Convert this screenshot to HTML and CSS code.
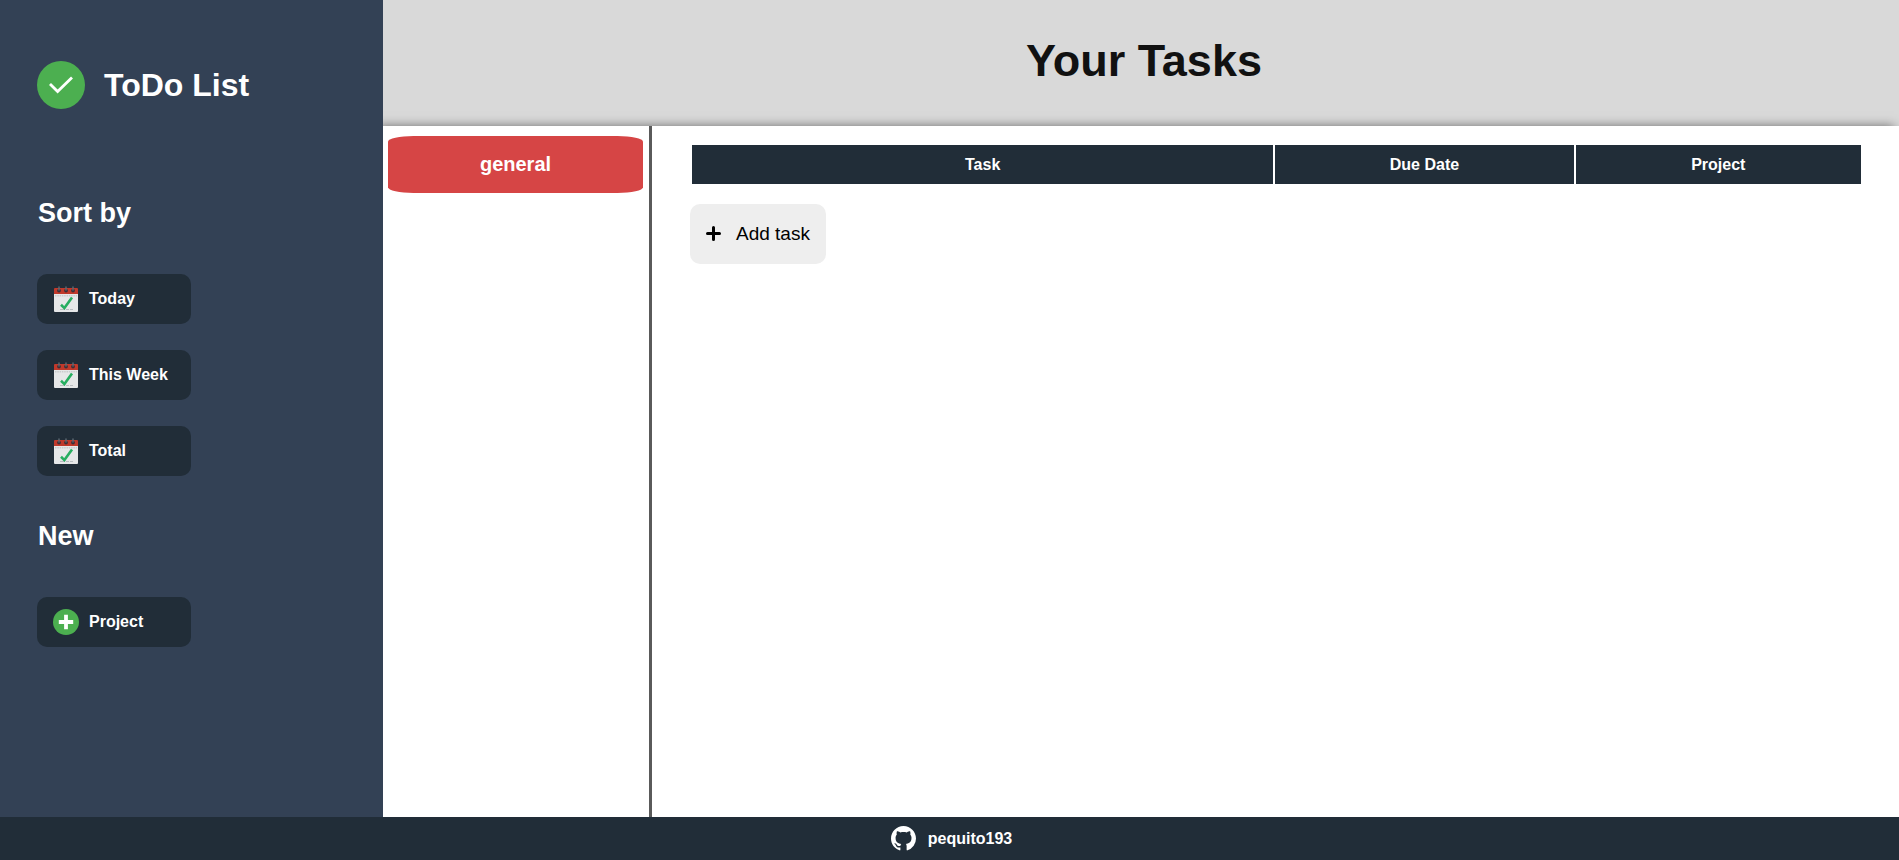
FILE: index.html
```html
<!DOCTYPE html>
<html lang="en">
<head>
<meta charset="utf-8">
<meta name="viewport" content="width=device-width, initial-scale=1">
<title>ToDo List</title>
<link rel="stylesheet" href="styles.css">
</head>
<body>
<svg class="sprite" aria-hidden="true">
  <symbol id="calendar" viewBox="0 0 26 26">
    <path fill="#e6e7e8" d="M1 7h24v18a1 1 0 0 1-1 1H2a1 1 0 0 1-1-1z"/>
    <path fill="#c0392b" d="M2 2h22a1 1 0 0 1 1 1v5H1V3a1 1 0 0 1 1-1z"/>
    <g fill="#3b2f38"><circle cx="6" cy="4.600" r="1.900"/><circle cx="13" cy="4.600" r="1.900"/><circle cx="20" cy="4.600" r="1.900"/></g>
    <path stroke="#5f6b75" stroke-width="1.400" stroke-linecap="round" d="M6 1v3M13 1v3M20 1v3"/>
    <path stroke="#c9cccd" stroke-width="1.500" stroke-dasharray="1.500 .8" d="M2 9.800h22"/>
    <path stroke="#b9bdc0" stroke-width="1" stroke-dasharray="5 1 3 1" d="M7 23.500h13"/>
    <path fill="none" stroke="#27ae60" stroke-width="2.600" d="M8 18.800l3.400 3.300L19 11.600"/>
  </symbol>
</svg>
<div class="page">
  <aside class="sidebar">
    <div class="brand">
      <svg class="brand-icon" viewBox="0 0 48 48" aria-hidden="true"><circle cx="24" cy="24" r="24" fill="#4caf50"/><path fill="none" stroke="#fff" stroke-width="2.800" d="M13 23l7.600 7.600L35 16.600"/></svg>
      <h1 class="brand-name">ToDo List</h1>
    </div>
    <h2 class="group-title">Sort by</h2>
    <div class="group">
      <button class="nav-button" type="button"><svg class="nav-icon" aria-hidden="true"><use href="#calendar"/></svg>Today</button>
      <button class="nav-button" type="button"><svg class="nav-icon" aria-hidden="true"><use href="#calendar"/></svg>This Week</button>
      <button class="nav-button" type="button"><svg class="nav-icon" aria-hidden="true"><use href="#calendar"/></svg>Total</button>
    </div>
    <h2 class="group-title">New</h2>
    <div class="group">
      <button class="nav-button" type="button"><svg class="nav-icon" viewBox="0 0 26 26" aria-hidden="true"><circle cx="13" cy="13" r="13" fill="#4caf50"/><path stroke="#fff" stroke-width="3.800" d="M13 5.800v14.400M5.800 13h14.400"/></svg>Project</button>
    </div>
  </aside>
  <header class="header"><h1 class="title">Your Tasks</h1></header>
  <main class="content">
    <nav class="projects" aria-label="Projects">
      <button class="project" type="button">general</button>
    </nav>
    <section class="tasks">
      <table class="task-table">
        <colgroup><col class="col-task"><col class="col-date"><col class="col-project"></colgroup>
        <thead><tr><th scope="col">Task</th><th scope="col">Due Date</th><th scope="col">Project</th></tr></thead>
      </table>
      <button class="add-task" type="button"><svg class="add-icon" viewBox="0 0 24 24" aria-hidden="true"><path stroke="#000" stroke-width="3" stroke-linecap="round" d="M11.500 5.500v12M5.500 11.500h12"/></svg>Add task</button>
    </section>
  </main>
  <footer class="footer">
    <a class="profile" href="#"><svg class="github-icon" viewBox="0 0 16 16" aria-hidden="true"><path fill="#fff" d="M8 0C3.580 0 0 3.580 0 8c0 3.540 2.290 6.530 5.470 7.590.4.070.55-.17.55-.38 0-.19-.01-.82-.01-1.490-2.010.37-2.530-.49-2.690-.94-.09-.23-.48-.94-.82-1.130-.28-.15-.68-.52-.01-.53.63-.01 1.080.58 1.230.82.72 1.210 1.870.87 2.330.66.070-.52.28-.87.51-1.070-1.780-.2-3.640-.89-3.640-3.950 0-.87.31-1.590.82-2.150-.08-.2-.36-1.020.08-2.120 0 0 .67-.21 2.200.82.64-.18 1.320-.27 2-.27s1.360.09 2 .27c1.530-1.040 2.200-.82 2.200-.82.44 1.100.16 1.920.08 2.120.51.56.82 1.270.82 2.150 0 3.070-1.870 3.750-3.650 3.950.29.25.54.73.54 1.480 0 1.070-.01 1.930-.01 2.200 0 .21.15.46.55.38A8.010 8.010 0 0 0 16 8c0-4.420-3.580-8-8-8z"/></svg>pequito193</a>
  </footer>
</div>
</body>
</html>
```
FILE: styles.css
```css
* {
  box-sizing: border-box;
}

body {
  margin: 0;
  font-family: "Liberation Sans", Arial, sans-serif;
  font-size: 16px;
  color: #111;
}

button {
  border: 0;
  font-family: inherit;
  cursor: pointer;
}

h1, h2 {
  margin: 0;
}

.sprite {
  position: absolute;
  width: 0;
  height: 0;
}

.page {
  display: grid;
  grid-template-columns: 383px 1fr;
  grid-template-rows: auto 1fr auto;
  grid-template-areas: "side head" "side main" "foot foot";
  min-height: 100vh;
}

.sidebar {
  grid-area: side;
  z-index: 1;
  padding: 61px 37px;
  background: #334155;
  color: #fff;
}

.brand {
  display: flex;
  align-items: center;
  gap: 19px;
  margin-bottom: 89px;
}

.brand-icon {
  width: 48px;
  height: 48px;
}

.brand-name {
  font-size: 32px;
  line-height: 36px;
}

.group-title {
  margin-bottom: 45px;
  padding-left: 1px;
  font-size: 27px;
  line-height: 31px;
}

.group {
  display: flex;
  flex-direction: column;
  align-items: flex-start;
  gap: 26px;
  margin-bottom: 45px;
}

.nav-button {
  display: flex;
  align-items: center;
  gap: 10px;
  width: 154px;
  height: 50px;
  padding: 0 16px;
  border-radius: 10px;
  background: #212d38;
  color: #fff;
  font-size: 16px;
  font-weight: bold;
}

.nav-icon {
  flex: none;
  width: 26px;
  height: 26px;
}

.header {
  grid-area: head;
  padding: 35px 0 40px 6px;
  background: #d9d9d9;
  text-align: center;
}

.title {
  font-size: 45px;
  line-height: 51px;
}

.content {
  grid-area: main;
  display: grid;
  grid-template-columns: 269px 1fr;
  background: #fff;
  box-shadow: -5px 0 10px rgba(0, 0, 0, 0.5);
}

.projects {
  padding: 10px 6px 10px 5px;
  border-right: 3px solid #5a5a5a;
}

.project {
  width: 100%;
  padding: 17px 0;
  border-radius: 10%;
  background: #d64545;
  color: #fff;
  font-size: 20px;
  font-weight: bold;
  line-height: 23px;
}

.tasks {
  padding: 17px 36px 17px 38px;
}

.task-table {
  width: 100%;
  margin-bottom: 18px;
  table-layout: fixed;
  border-spacing: 2px;
}

.col-task {
  width: 49.9%;
}

.col-date {
  width: 25.6%;
}

.task-table th {
  padding: 10px;
  background: #212d38;
  color: #fff;
  line-height: 19px;
}

.add-task {
  display: flex;
  align-items: center;
  gap: 10px;
  height: 60px;
  padding: 0 16px 0 12px;
  border-radius: 10px;
  background: #eee;
  color: #000;
  font-size: 19px;
}

.add-icon {
  width: 24px;
  height: 24px;
}

.footer {
  grid-area: foot;
  z-index: 1;
  display: flex;
  justify-content: center;
  padding: 9px 0 9px 4px;
  background: #212d38;
}

.profile {
  display: flex;
  align-items: center;
  gap: 12px;
  color: #fff;
  font-weight: bold;
  text-decoration: none;
}

.github-icon {
  width: 25px;
  height: 25px;
}
```
